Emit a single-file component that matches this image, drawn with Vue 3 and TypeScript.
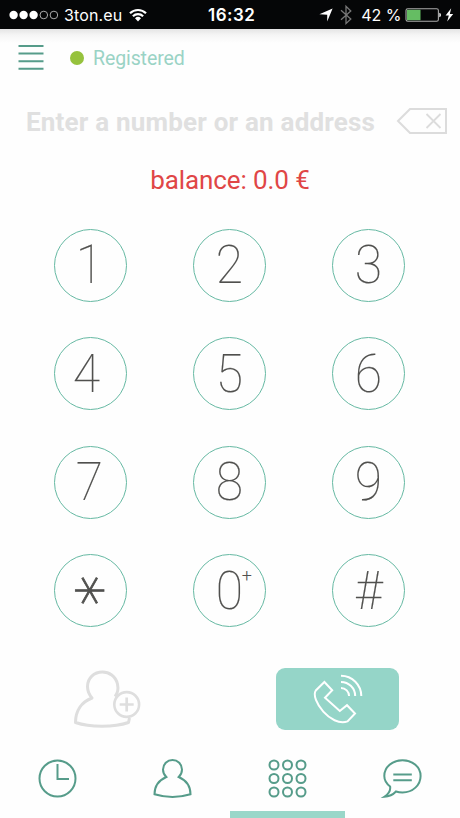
<script setup lang="ts">
interface Key {
  label: string
  kind?: 'star' | 'hash' | 'zero' | 'four'
  sup?: string
}

const keys: Key[] = [
  { label: '1' }, { label: '2' }, { label: '3' },
  { label: '4', kind: 'four' }, { label: '5' }, { label: '6' },
  { label: '7' }, { label: '8' }, { label: '9' },
  { label: '*', kind: 'star' }, { label: '0', kind: 'zero', sup: '+' }, { label: '#', kind: 'hash' },
]

const dots: number[] = [6.5, 20, 33.5]
</script>

<template>
  <div class="phone">
    <div class="status">
      <div class="carrier">
        <svg class="signal" width="50" height="10" viewBox="0 0 50 10">
          <g fill="#fff">
            <circle cx="4.6" cy="5" r="4.2" /><circle cx="14.6" cy="5" r="4.2" /><circle cx="24.6" cy="5" r="4.2" />
          </g>
          <g fill="none" stroke="#aaa" stroke-width="1">
            <circle cx="34.8" cy="5" r="3.8" /><circle cx="44.9" cy="5" r="3.8" />
          </g>
        </svg>
        <span class="carrier-name">3ton.eu</span>
        <svg class="wifi" width="18" height="14" viewBox="0 0 18 14">
          <g fill="none" stroke="#fff" stroke-width="2.2">
            <path d="M1 5.3a11.3 11.3 0 0 1 16 0" /><path d="M3.9 8.3a7.2 7.2 0 0 1 10.2 0" />
          </g>
          <path d="M9 13.4 6 10.3a4.3 4.3 0 0 1 6 0z" fill="#fff" />
        </svg>
      </div>
      <span class="clock">16:32</span>
      <div class="power">
        <svg class="arrow" width="14" height="14" viewBox="0 0 14 14">
          <path d="M13.6.4 8.2 13.6V6.8L.4 6.2z" fill="#fff" />
        </svg>
        <svg class="bluetooth" width="12" height="20" viewBox="0 0 12 20">
          <path d="M1 5.2 10.8 14 6 18.6V1.2L10.8 6 1 14.8" fill="none" stroke="#777" stroke-width="1.3" />
        </svg>
        <span class="percent">42 %</span>
        <svg width="48" height="16" viewBox="0 0 48 16">
          <rect x="0" y="1.8" width="32.4" height="12.4" rx="1.8" fill="none" stroke="#aaa" stroke-width="1.1" />
          <rect x="1" y="2.8" width="13.5" height="10.4" fill="#65bd63" />
          <path d="M33.3 5.7a2.4 2.4 0 0 1 0 4.6z" fill="#eee" />
          <path d="M45.2 1.2 39.6 8.4h3.2l-1.6 6.2 6-7.6h-3.4z" fill="#fff" />
        </svg>
      </div>
    </div>

    <header class="account">
      <svg class="menu" width="26" height="27" viewBox="0 0 26 27">
        <path d="M.5 2h25M.5 9.6h25M.5 17.2h25M.5 24.8h25" stroke="#569c8a" stroke-width="2" />
      </svg>
      <span class="presence"></span>
      <span class="registered">Registered</span>
    </header>

    <div class="entry">
      <span class="placeholder">Enter a number or an address</span>
      <svg class="backspace" width="52" height="28" viewBox="0 0 52 28">
        <g fill="none" stroke="#dcdcdc">
          <path d="M2 14 14 2h36v24H14z" stroke-width="2" />
          <path d="m30.5 7 14 14M44.5 7l-14 14" stroke-width="1.8" />
        </g>
      </svg>
    </div>

    <div class="balance"><span>balance: 0.0 €</span></div>

    <div class="keypad">
      <button v-for="key in keys" :key="key.label" class="key" :class="key.kind">
        <span class="digit">{{ key.label }}</span>
        <span v-if="key.sup" class="sup">{{ key.sup }}</span>
      </button>
    </div>

    <div class="actions">
      <svg class="add" width="68" height="58" viewBox="0 0 68 58">
        <g fill="none" stroke="#dedede" stroke-width="3" stroke-linejoin="round">
          <path d="M42 26.5C45 23 45.5 19 44.5 14 42.5 6 36 2 29.5 2 21 2 14.5 8 14.5 16.5c0 5 1.5 8 4.5 11.5C8.5 32 2.5 41 2.5 52.5 17 57.5 41 57.5 55.5 52.5L56.5 48" />
          <circle cx="53.7" cy="34.5" r="12.4" stroke-width="2.6" />
          <path d="M46.7 34.5h14M53.7 27.5v14" stroke-width="2.7" />
        </g>
      </svg>
      <button class="call">
        <svg width="50" height="52" viewBox="0 0 50 52">
          <g fill="none" stroke="#fff" stroke-width="2">
            <path d="M11.4 9 19.2 17.2 12 24.7 26.8 38 34 32.2 42 40.5 34.5 48.4C26 51.5 16.5 45.5 10.3 38.6 3.7 31.2-.2 21.8 2.8 17.5z" />
            <path d="M28 2.8a20.3 20.3 0 0 1 20.3 20.3M28 8.9a14.2 14.2 0 0 1 14.2 14.2M28 15a8.1 8.1 0 0 1 8.1 8.1" />
          </g>
        </svg>
      </button>
    </div>

    <nav class="tabs">
      <div class="tab">
        <svg width="40" height="40" viewBox="0 0 40 40">
          <circle cx="19.5" cy="20.5" r="18" /><path d="M19.5 6v15H31" />
        </svg>
      </div>
      <div class="tab">
        <svg width="40" height="40" viewBox="0.5 0 40 40">
          <path d="M13.8 19C11.5 16.8 10.5 14.5 10.5 11.5a9.5 9.5 0 0 1 19 0c0 3-1 5.3-3.3 7.5C33 22 38 26.5 38 36.3 27 39.6 13 39.6 2 36.3c0-9.8 5-14.3 11.8-17.3z" />
        </svg>
      </div>
      <div class="tab active">
        <svg width="40" height="40" viewBox="0.5 0 40 40">
          <template v-for="y in dots" :key="y">
            <circle v-for="x in dots" :key="x" :cx="x" :cy="y + 0.5" r="4.5" />
          </template>
        </svg>
      </div>
      <div class="tab">
        <svg width="40" height="40" viewBox="0.7 0 40 40">
          <path d="M7.8 28.5C4 25.5 2 22 2 18 2 9 10 2.3 20.2 2.3S38.3 9 38.3 18 30.5 34.5 20.2 34.5c-2.2 0-4.4-.3-6.5-1-3 3.2-7 5-11.7 5.3C5.5 36.5 8.5 32.5 7.8 28.5z" />
          <path d="M11 16.5h18.5M11 22.3h18.5" />
        </svg>
      </div>
    </nav>
  </div>
</template>

<style>
body {
  margin: 0;
  background: #fefefe;
}
</style>

<style scoped>
.phone {
  display: flex;
  flex-direction: column;
  width: 460px;
  height: 818px;
  overflow: hidden;
  background: #fefefe;
  font-family: Roboto, sans-serif;
}

.phone svg {
  display: block;
  flex: none;
  overflow: visible;
}

button {
  padding: 0;
  border: 0;
  background: none;
  font: inherit;
}

.status {
  display: grid;
  grid-template-columns: 1fr auto 1fr;
  align-items: center;
  height: 29px;
  flex: none;
  padding: 0 6.5px 0 9px;
  background: #050607;
  color: #fff;
  font-size: 17px;
  line-height: 29px;
  white-space: nowrap;
}

.carrier,
.power {
  display: flex;
  align-items: center;
}

.carrier-name {
  margin: 0 6.5px 0 5px;
  font-family: Inter, sans-serif;
  font-size: 16px;
  letter-spacing: 0.15px;
}

.clock {
  padding: 1px 0 0 1px;
  font-family: Inter, sans-serif;
  font-size: 17px;
  font-weight: 600;
  letter-spacing: 0.5px;
}

.power {
  justify-content: flex-end;
}

.bluetooth {
  margin: 0 9px 0 7px;
}

.percent {
  margin-right: 4px;
  font-family: Inter, sans-serif;
  font-size: 16px;
}

.account {
  display: flex;
  align-items: center;
  height: 57px;
  flex: none;
  padding-left: 18px;
  background: linear-gradient(#e4e4e4, #f5f5f5 6px, #fefefe 14px);
}

.presence {
  width: 14px;
  height: 14px;
  margin-left: 26px;
  border-radius: 50%;
  background: #96c23d;
}

.registered {
  margin-left: 9px;
  padding-top: 1px;
  color: #9ad3c5;
  font-size: 19.5px;
  letter-spacing: -0.1px;
}

.entry {
  display: flex;
  align-items: center;
  justify-content: space-between;
  height: 70px;
  flex: none;
  padding: 0 12px 0 26px;
  white-space: nowrap;
}

.placeholder {
  padding-top: 2px;
  color: #e0e0e0;
  font-size: 26px;
  font-weight: 700;
  letter-spacing: 0.2px;
}

.balance {
  height: 72.5px;
  flex: none;
  color: #e04646;
  font-size: 26px;
  line-height: 48px;
  letter-spacing: -0.1px;
  text-align: center;
}

.keypad {
  display: grid;
  grid-template-columns: repeat(3, 73px);
  grid-auto-rows: 73px;
  gap: 35.5px 66.3px;
  height: 435.5px;
  flex: none;
  padding-left: 53.5px;
  box-sizing: border-box;
}

.key {
  position: relative;
  display: flex;
  align-items: center;
  justify-content: center;
  border: 1.5px solid #66b9a3;
  border-radius: 50%;
  color: #50504e;
}

.digit {
  font-size: 53px;
  font-weight: 100;
  line-height: 70px;
  transform: scaleX(0.94);
  -webkit-text-stroke: 0.15px #50504e;
}

.four .digit {
  transform: translateX(-3px) scaleX(0.94);
}

.sup {
  position: absolute;
  top: 11px;
  left: 48px;
  font-size: 18px;
  font-weight: 300;
  line-height: 20px;
}

.star .digit {
  font-family: Inter, sans-serif;
  font-size: 70px;
  font-weight: 100;
  transform: translate(-13px, -0.5px) rotate(90deg);
  -webkit-text-stroke: 0.8px #50504e;
}

.actions {
  display: flex;
  justify-content: space-between;
  height: 76px;
  flex: none;
  padding: 4px 61px 0 73px;
}

.add {
  margin-top: 1.5px;
}

.call {
  display: flex;
  align-items: center;
  justify-content: center;
  width: 123px;
  height: 62px;
  border-radius: 9px;
  background: #95d5c8;
}

.tabs {
  display: flex;
  flex: 1;
}

.tab {
  display: flex;
  justify-content: center;
  width: 115px;
  padding-top: 14px;
  box-sizing: border-box;
  fill: none;
  stroke: #569c8a;
  stroke-width: 2;
}

.active {
  border-bottom: 7px solid #9ad7c9;
}
</style>
